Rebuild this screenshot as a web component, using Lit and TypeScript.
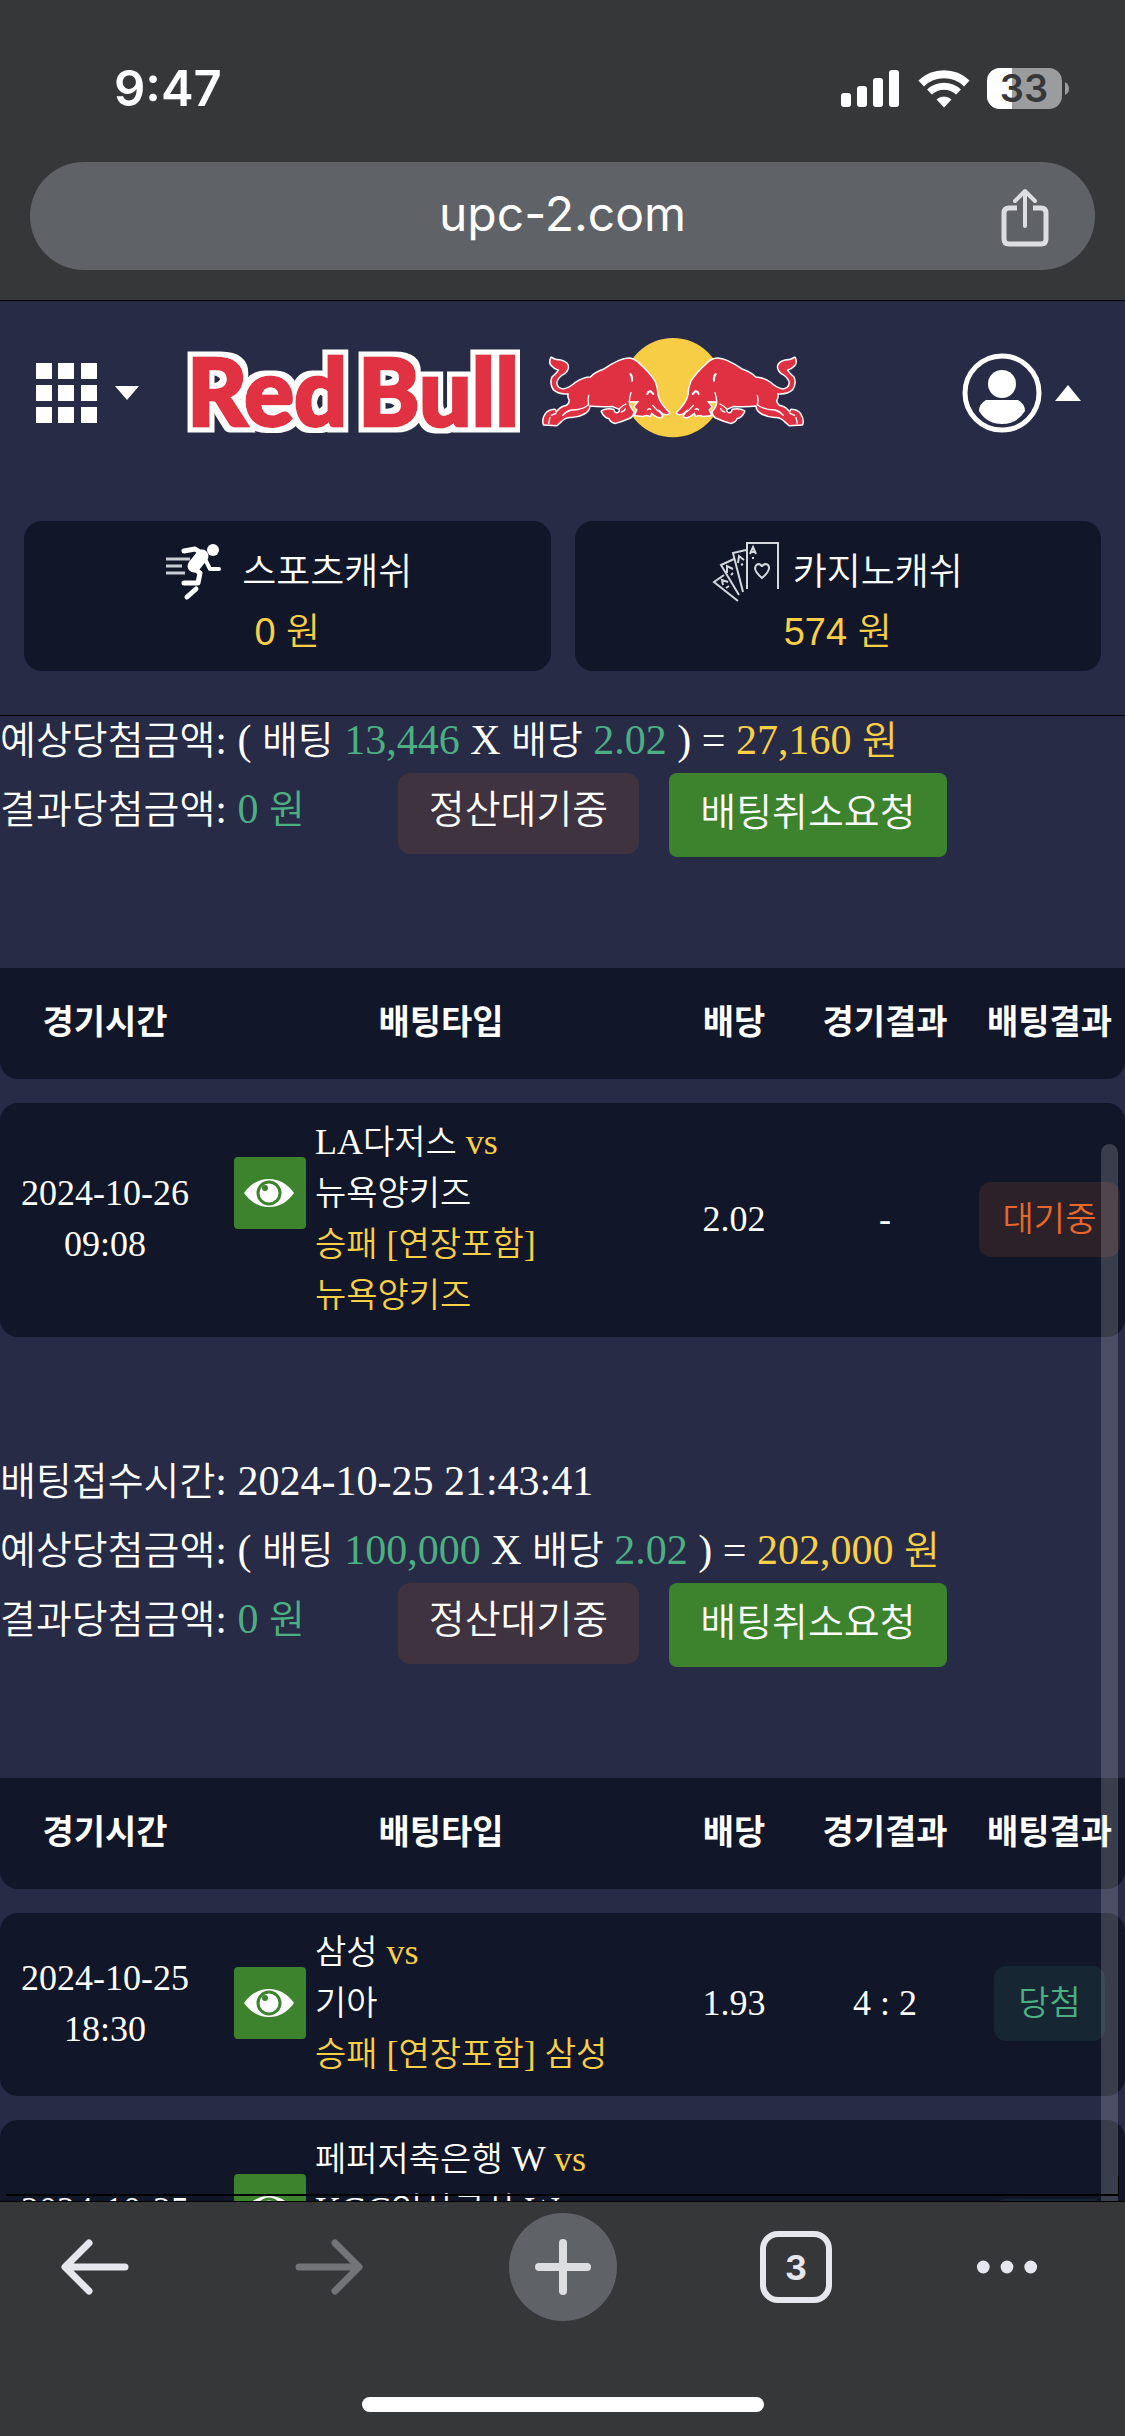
import { LitElement, html, svg, css } from "lit";
import { customElement, property } from "lit/decorators.js";

interface Game {
  date: string;
  time: string;
  home: string;
  away: string;
  pick: string[];
  odds: string;
  score: string;
  status: "wait" | "win";
}

interface Slip {
  received?: string;
  stake: string;
  odds: string;
  payout: string;
  games: Game[];
}

const STATUS_LABEL = { wait: "대기중", win: "당첨" };

const SLIPS: Slip[] = [
  {
    stake: "13,446",
    odds: "2.02",
    payout: "27,160",
    games: [
      {
        date: "2024-10-26",
        time: "09:08",
        home: "LA다저스",
        away: "뉴욕양키즈",
        pick: ["승패 [연장포함]", "뉴욕양키즈"],
        odds: "2.02",
        score: "-",
        status: "wait",
      },
    ],
  },
  {
    received: "2024-10-25 21:43:41",
    stake: "100,000",
    odds: "2.02",
    payout: "202,000",
    games: [
      {
        date: "2024-10-25",
        time: "18:30",
        home: "삼성",
        away: "기아",
        pick: ["승패 [연장포함] 삼성"],
        odds: "1.93",
        score: "4 : 2",
        status: "win",
      },
      {
        date: "2024-10-25",
        time: "19:00",
        home: "페퍼저축은행 W",
        away: "KGC인삼공사 W",
        pick: ["승패 [연장포함]", "KGC인삼공사 W"],
        odds: "1.05",
        score: "0 : 3",
        status: "win",
      },
    ],
  },
];

/* Wraps each Hangul run so that it can be sized apart from the Latin text. */
const mix = (text: string) =>
  text
    .split(/([\uac00-\ud7a3]+)/)
    .filter((part) => part)
    .map((part) => (/[\uac00-\ud7a3]/.test(part) ? html`<span class="ko">${part}</span>` : part));

const hangul = css`
  .ko {
    font-family: "Noto Sans CJK KR", sans-serif;
    font-size: var(--ko-size);
    font-weight: var(--ko-weight, 350);
    line-height: 0;
  }
`;

@customElement("status-bar")
export class StatusBar extends LitElement {
  static styles = css`
    :host {
      display: flex;
      justify-content: space-between;
      align-items: center;
      padding: 58px 55px 0 114px;
      height: 62px;
      color: #fff;
      font: 600 49px/62px Inter, sans-serif;
    }
    .icons {
      display: flex;
      align-items: center;
      gap: 17px;
    }
    svg {
      display: block;
    }
    .level {
      font: 600 38px Inter, sans-serif;
    }
  `;

  render() {
    return html`
      <span>9:47</span>
      <div class="icons">
        <svg width="60" height="38" viewBox="0 0 60 38" fill="#fff">
          <rect x="0" y="23" width="10" height="14" rx="3" />
          <rect x="16" y="16" width="10" height="21" rx="3" />
          <rect x="32" y="8" width="10" height="29" rx="3" />
          <rect x="48" y="0" width="10" height="37" rx="3" />
        </svg>
        <svg width="52" height="38" viewBox="0 0 52 38">
          <path d="M3.200 13.500A33 33 0 0 1 48.800 13.500" fill="none" stroke="#fff" stroke-width="8" />
          <path d="M11.500 22A21 21 0 0 1 40.500 22" fill="none" stroke="#fff" stroke-width="7" />
          <path d="M18.500 29.500A11 11 0 0 1 33.500 29.500L26 37.500Z" fill="#fff" />
        </svg>
        <svg width="83" height="42" viewBox="0 0 83 42">
          <clipPath id="cell"><rect width="75" height="41" rx="13" /></clipPath>
          <g clip-path="url(#cell)">
            <rect width="75" height="41" fill="#9b9c9e" />
            <rect width="25" height="41" fill="#fff" />
          </g>
          <path d="M78 14Q82 16 82 20.500T78 27Z" fill="#9b9c9e" />
          <text class="level" x="37" y="34" text-anchor="middle" fill="#363739">33</text>
        </svg>
      </div>
    `;
  }
}

@customElement("address-bar")
export class AddressBar extends LitElement {
  static styles = css`
    :host {
      display: block;
      padding: 42px 30px 30px;
      border-bottom: 1px solid #000;
    }
    .pill {
      display: grid;
      grid-template-columns: 108px 1fr 108px;
      align-items: center;
      height: 108px;
      padding: 0 16px 0 0;
      box-sizing: border-box;
      border-radius: 54px;
      background: #5f6267;
    }
    .url {
      grid-column: 2;
      padding: 0 0 4px 16px;
      text-align: center;
      color: #fff;
      text-decoration: none;
      font: 400 48px/60px Inter, sans-serif;
    }
    .share {
      display: flex;
      justify-content: center;
      align-items: center;
      padding: 4px 0 0;
      border: 0;
      height: 108px;
      background: none;
    }
  `;

  render() {
    return html`
      <div class="pill">
        <a class="url" href="#">upc-2.com</a>
        <button class="share" aria-label="공유">
          <svg width="50" height="60" viewBox="0 0 50 60" fill="none" stroke="#dcdee2" stroke-width="5" stroke-linecap="round" stroke-linejoin="round">
            <path d="M17 20H9Q4 20 4 25V51Q4 56 9 56H41Q46 56 46 51V25Q46 20 41 20H33" stroke-linecap="butt" />
            <path d="M25 38V4M15 13L25 3L35 13" stroke-width="4" />
          </svg>
        </button>
      </div>
    `;
  }
}

const bull = svg`
  <path fill="#e03142" stroke="#fff" stroke-width="9" stroke-linejoin="round" paint-order="stroke"
    d="M52 84Q62 92 80 92Q104 98 101 114Q97 128 82 134Q66 148 66 160Q69 178 88 179Q106 176 125 159
    Q148 143 170 143Q184 128 209 120Q232 104 254 94Q276 84 290 87Q304 90 318 105Q346 130 361 154
    Q369 172 370 196Q376 222 405 249Q399 255 386 249Q378 240 371 237L384 259Q378 264 366 257L352 247
    L348 257Q338 252 327 257L304 255L311 239L302 230L316 213L284 214Q282 228 298 246Q296 258 288 262
    Q266 272 244 278Q232 276 226 264Q212 262 204 244Q218 236 238 240Q240 252 252 250Q262 242 256 236
    L236 227Q200 229 166 226Q166 242 150 250Q128 262 106 260Q90 262 80 274L68 285L30 283Q25 268 36 252
    Q44 241 62 240L66 250Q78 234 90 230Q106 228 108 212Q102 200 104 189Q76 192 60 178Q48 160 56 142
    Q74 126 76 119Q62 116 54 106Q46 98 52 84Z" />
  <g fill="none" stroke="#fff" stroke-width="4" stroke-linecap="round">
    <path d="M164 196Q160 212 164 224Q144 240 112 240Q96 244 86 256" />
    <path d="M289 132Q296 140 294 152" stroke-width="6" />
    <path d="M291 188Q286 202 286 214" />
    <path d="M340 192Q342 184 350 184L358 192" stroke-width="6" />
    <path d="M256 236Q266 226 276 222M262 246Q272 244 274 236" />
    <path d="M340 240Q344 234 350 238M356 226Q368 242 384 250" />
    <path d="M52 256L66 250M48 262L44 280" />
  </g>
`;

@customElement("site-header")
export class SiteHeader extends LitElement {
  static styles = [
    hangul,
    css`
      :host {
        display: block;
        --ko-size: 37px;
        background: #272b46;
        border-bottom: 1px solid #000;
      }
      svg {
        display: block;
        overflow: visible;
      }
      .bar {
        display: flex;
        align-items: center;
        height: 184px;
        padding: 0 44px 0 36px;
      }
      .icon {
        display: flex;
        align-items: center;
        gap: 17px;
        padding: 0;
        border: 0;
        background: none;
      }
      .profile {
        gap: 13px;
      }
      .brand {
        display: flex;
        align-items: center;
        gap: 22px;
        margin: 0 auto 0 48px;
      }
      .wordmark {
        font: 900 93px Lato, sans-serif;
      }
      .wallets {
        display: grid;
        grid-template-columns: 1fr 1fr;
        gap: 24px;
        padding: 36px 24px 44px;
      }
      .wallet {
        padding: 21px 0 9px;
        border-radius: 18px;
        background: #111628;
        text-align: center;
      }
      .name {
        display: flex;
        justify-content: center;
        align-items: center;
        gap: 14px;
        color: #fff;
        font: 39px/60px "Liberation Sans", sans-serif;
      }
      .amount {
        color: #f9cf45;
        font: 38px/60px "Liberation Sans", sans-serif;
      }
    `,
  ];

  render() {
    return html`
      <div class="bar">
        <button class="icon" aria-label="메뉴">
          <svg width="62" height="60" viewBox="0 0 62 60" fill="#fff">
            ${[0, 22, 44].map((y) => [0, 22, 45].map((x) => svg`<rect x=${x} y=${y} width="16" height="16" />`))}
          </svg>
          <svg width="24" height="14" viewBox="0 0 24 14"><path d="M0 0H24L12 14Z" fill="#fff" /></svg>
        </button>
        <a class="brand" href="#" aria-label="Red Bull">
          <svg width="332" height="98" viewBox="0 0 332 98">
            <g class="wordmark" fill="#e03142" stroke-linejoin="miter" paint-order="stroke">
              <g filter="url(#outline)">
                <text x="0" y="82" stroke="#e03142" stroke-width="3">Red</text>
                <text x="171" y="82" stroke="#e03142" stroke-width="3">Bull</text>
              </g>
            </g>
            <filter id="outline" x="-5%" y="-20%" width="110%" height="140%">
              <feMorphology in="SourceAlpha" operator="dilate" radius="5" result="grown" />
              <feFlood flood-color="#fff" />
              <feComposite in2="grown" operator="in" />
              <feMerge>
                <feMergeNode />
                <feMergeNode in="SourceGraphic" />
              </feMerge>
            </filter>
          </svg>
          <svg width="264" height="112" viewBox="21 21 792 336">
            <circle cx="417" cy="173" r="149" fill="#f8cd46" />
            ${bull}
            <g transform="translate(834 0) scale(-1 1)">${bull}</g>
          </svg>
        </a>
        <button class="icon profile" aria-label="내 정보">
          <svg width="80" height="80" viewBox="0 0 80 80">
            <circle cx="40" cy="40" r="37" fill="none" stroke="#fff" stroke-width="5" />
            <circle cx="40" cy="31" r="14" fill="#fff" />
            <path d="M24 47H56Q63 51 63 58Q55 71 40 71T17 58Q17 51 24 47Z" fill="#fff" />
          </svg>
          <svg width="26" height="16" viewBox="0 0 26 16"><path d="M0 16H26L13 0Z" fill="#fff" /></svg>
        </button>
      </div>
      <div class="wallets">
        <div class="wallet">
          <div class="name">
            <svg width="66" height="60" viewBox="0 0 66 60">
              <g stroke="#c9ccd4" stroke-width="3"><path d="M4 17H28M4 24H20M4 31H23" /></g>
              <circle cx="51" cy="8" r="6" fill="#fff" />
              <g fill="none" stroke="#fff" stroke-linejoin="round" stroke-linecap="round">
                <path d="M22 9L33 7L41 12" stroke-width="5" />
                <path d="M40 14L32 24" stroke-width="13" />
                <path d="M43 17L48 27H57" stroke-width="4" />
                <path d="M30 25L38 31L36 41H22" stroke-width="5" />
                <path d="M34 47L25 55" stroke-width="5" />
              </g>
            </svg>
            <span>${mix("스포츠캐쉬")}</span>
          </div>
          <div class="amount">${mix("0 원")}</div>
        </div>
        <div class="wallet">
          <div class="name">
            <svg width="66" height="60" viewBox="0 0 66 60" fill="none" stroke="#d5d7de" stroke-width="2">
              <path d="M34 47V1H65V47" />
              <path d="M49 36Q42 30 42 26Q43 22 46 22Q49 23 49 25Q49 23 52 22Q56 22 56 26Q56 30 49 36Z" />
              <path d="M37 12L40 5L43 12M38 10H42M40 15V17" />
              <path d="M33 8L20 11L30 50M25 21L26 14L31 18M28 23L30 22" />
              <path d="M21 17L8 23L26 53M14 31L14 24L20 27M18 33L20 31" />
              <path d="M11 33L1 40L25 59M10 43L9 38L15 40M13 46L16 44" />
            </svg>
            <span>${mix("카지노캐쉬")}</span>
          </div>
          <div class="amount">${mix("574 원")}</div>
        </div>
      </div>
    `;
  }
}

@customElement("bet-slip")
export class BetSlip extends LitElement {
  @property({ attribute: false }) slip!: Slip;

  static styles = [
    hangul,
    css`
      :host {
        display: block;
        padding-bottom: 96px;
        color: #fff;
        --ko-size: 39px;
        font: 42px/48px "Liberation Serif", serif;
      }
      .lines {
        display: grid;
        gap: 21px;
      }
      .green {
        color: #4cae83;
      }
      .yellow {
        color: #f9cf45;
      }
      .result {
        display: flex;
        align-items: flex-start;
        margin: 9px 0 87px;
        line-height: 72px;
      }
      .tag {
        margin: 0 30px 0 93px;
        padding: 0 31px 9px;
        border-radius: 12px;
        background: #3e333f;
      }
      .cancel {
        padding: 0 31px 6px;
        border: 0;
        border-radius: 8px;
        background: #3d832d;
        color: #fff;
        font: 42px/78px "Liberation Serif", serif;
      }
      .games {
        width: 100%;
        table-layout: fixed;
        border-collapse: separate;
        border-spacing: 0 24px;
        --ko-size: 34px;
        font: 36px/51px "Liberation Serif", serif;
        text-align: center;
      }
      .c-date {
        width: 210px;
      }
      .c-odds {
        width: 124px;
      }
      .c-score {
        width: 178px;
      }
      .c-status {
        width: 151px;
      }
      th,
      td {
        padding: 14px 0 16px;
        background: #111628;
      }
      th {
        --ko-weight: 700;
        padding: 29px 0 31px;
      }
      th:first-child {
        border-radius: 0 0 0 18px;
      }
      th:last-child {
        border-radius: 0 0 18px 0;
      }
      td:first-child {
        border-radius: 18px 0 0 18px;
      }
      td:last-child {
        border-radius: 0 18px 18px 0;
      }
      .match {
        display: flex;
        align-items: flex-start;
        gap: 9px;
        padding-left: 24px;
        text-align: left;
      }
      .eye {
        flex: none;
        width: 72px;
        height: 72px;
        margin-top: 40px;
        padding: 0;
        border: 0;
        border-radius: 4px;
        background: #3d832d;
      }
      .badge {
        display: inline-block;
        padding: 12px 24px;
        border-radius: 12px;
        vertical-align: middle;
      }
      .wait {
        background: #2c2029;
        color: #e5682a;
      }
      .win {
        background: #172633;
        color: #4cae83;
      }
    `,
  ];

  private renderGame(game: Game) {
    return html`
      <tr>
        <td>${game.date}<br />${game.time}</td>
        <td>
          <div class="match">
            <button class="eye" aria-label="상세보기">
              <svg width="72" height="72" viewBox="0 0 72 72">
                <path d="M10 36Q20 22 35 22T60 36Q50 50 35 50T10 36Z" fill="#fff" />
                <circle cx="35" cy="36" r="11" fill="#fff" stroke="#3d832d" stroke-width="3" />
                <circle cx="31" cy="31" r="3" fill="#3d832d" />
              </svg>
            </button>
            <div>
              <div>${mix(game.home)} <span class="yellow">vs</span></div>
              <div>${mix(game.away)}</div>
              ${game.pick.map((line) => html`<div class="yellow">${mix(line)}</div>`)}
            </div>
          </div>
        </td>
        <td>${game.odds}</td>
        <td>${game.score}</td>
        <td><span class="badge ${game.status}">${mix(STATUS_LABEL[game.status])}</span></td>
      </tr>
    `;
  }

  render() {
    const { received, stake, odds, payout, games } = this.slip;
    return html`
      <div class="lines">
        ${received ? html`<div>${mix("배팅접수시간: ")}${received}</div>` : null}
        <div>
          ${mix("예상당첨금액: ( 배팅 ")}<span class="green">${stake}</span>${mix(" X 배당 ")}<span class="green">${odds}</span>
          ) = <span class="yellow">${payout} ${mix("원")}</span>
        </div>
      </div>
      <div class="result">
        <div>${mix("결과당첨금액: ")}<span class="green">0 ${mix("원")}</span></div>
        <span class="tag">${mix("정산대기중")}</span>
        <button class="cancel">${mix("배팅취소요청")}</button>
      </div>
      <table class="games">
        <colgroup>
          <col class="c-date" />
          <col />
          <col class="c-odds" />
          <col class="c-score" />
          <col class="c-status" />
        </colgroup>
        <thead>
          <tr>
            ${["경기시간", "배팅타입", "배당", "경기결과", "배팅결과"].map((name) => html`<th scope="col">${mix(name)}</th>`)}
          </tr>
        </thead>
        <tbody>
          ${games.map((game) => this.renderGame(game))}
        </tbody>
      </table>
    `;
  }
}

@customElement("browser-nav")
export class BrowserNav extends LitElement {
  static styles = css`
    :host {
      display: block;
      padding-bottom: 24px;
      border-top: 1px solid #000;
      background: #363739;
    }
    .buttons {
      display: flex;
      justify-content: space-between;
      padding: 11px 41px 76px;
    }
    button {
      display: flex;
      justify-content: center;
      align-items: center;
      width: 108px;
      height: 108px;
      padding: 0;
      border: 0;
      background: none;
      color: #e6e7ec;
    }
    button:disabled {
      color: #737477;
    }
    .add {
      border-radius: 54px;
      background: #5f6368;
    }
    .more {
      padding-right: 46px;
    }
    .count {
      font: 700 34px Inter, sans-serif;
    }
    .home {
      width: 402px;
      height: 15px;
      margin: 0 auto;
      border-radius: 8px;
      background: #fff;
    }
  `;

  render() {
    return html`
      <nav class="buttons">
        <button aria-label="뒤로">
          <svg width="68" height="56" viewBox="0 0 68 56" fill="none" stroke="currentColor" stroke-width="7" stroke-linecap="round" stroke-linejoin="round">
            <path d="M64 28H5M28 4L4 28L28 52" />
          </svg>
        </button>
        <button aria-label="앞으로" disabled>
          <svg width="68" height="56" viewBox="0 0 68 56" fill="none" stroke="currentColor" stroke-width="7" stroke-linecap="round" stroke-linejoin="round">
            <path d="M4 28H63M40 4L64 28L40 52" />
          </svg>
        </button>
        <button class="add" aria-label="새 탭">
          <svg width="56" height="56" viewBox="0 0 56 56" stroke="#dcdee2" stroke-width="8" stroke-linecap="round">
            <path d="M4 28H52M28 4V52" />
          </svg>
        </button>
        <button aria-label="탭 목록">
          <svg width="74" height="74" viewBox="0 0 74 74">
            <rect x="4" y="4" width="66" height="66" rx="15" fill="none" stroke="currentColor" stroke-width="6" />
            <text class="count" x="37" y="50" text-anchor="middle" fill="currentColor">3</text>
          </svg>
        </button>
        <button class="more" aria-label="더보기">
          <svg width="68" height="16" viewBox="0 0 68 16" fill="currentColor">
            <circle cx="8" cy="8" r="7" />
            <circle cx="34" cy="8" r="7" />
            <circle cx="60" cy="8" r="7" />
          </svg>
        </button>
      </nav>
      <div class="home"></div>
    `;
  }
}

@customElement("app-root")
export class AppRoot extends LitElement {
  static styles = css`
    :host {
      display: flex;
      flex-direction: column;
      height: 100vh;
      background: #363739;
    }
    .view {
      position: relative;
      flex: 1;
      min-height: 0;
      background: #272b46;
    }
    .scroll {
      height: 100%;
      overflow-y: auto;
      scrollbar-width: none;
    }
    .thumb {
      position: absolute;
      top: 428px;
      right: 7px;
      bottom: 0;
      width: 17px;
      border-radius: 9px 9px 0 0;
      background: rgba(255, 255, 255, 0.17);
    }
    .edge {
      position: absolute;
      right: 6px;
      bottom: 5px;
      left: 6px;
      height: 18px;
      border-right: 1px solid #000;
      border-bottom: 2px solid #000;
      pointer-events: none;
    }
  `;

  render() {
    return html`
      <status-bar></status-bar>
      <address-bar></address-bar>
      <site-header></site-header>
      <main class="view">
        <div class="scroll">${SLIPS.map((slip) => html`<bet-slip .slip=${slip}></bet-slip>`)}</div>
        <div class="thumb"></div>
        <div class="edge"></div>
      </main>
      <browser-nav></browser-nav>
    `;
  }
}
